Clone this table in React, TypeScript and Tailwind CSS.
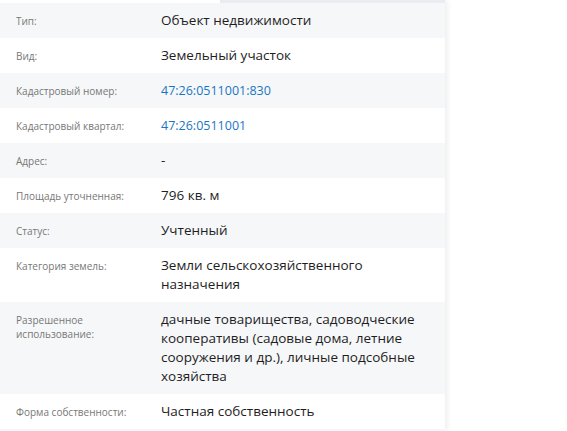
import React from "react";

type Row = { label: string; value: string; link?: boolean };

const rows: Row[] = [
  { label: "Тип:", value: "Объект недвижимости" },
  { label: "Вид:", value: "Земельный участок" },
  { label: "Кадастровый номер:", value: "47:26:0511001:830", link: true },
  { label: "Кадастровый квартал:", value: "47:26:0511001", link: true },
  { label: "Адрес:", value: "-" },
  { label: "Площадь уточненная:", value: "796 кв. м" },
  { label: "Статус:", value: "Учтенный" },
  { label: "Категория земель:", value: "Земли сельскохозяйственного назначения" },
  {
    label: "Разрешенное использование:",
    value:
      "дачные товарищества, садоводческие кооперативы (садовые дома, летние сооружения и др.), личные подсобные хозяйства",
  },
  { label: "Форма собственности:", value: "Частная собственность" },
  { label: "", value: "" },
];

export default function App() {
  return (
    <div
      className="w-[567px] h-[431px] overflow-hidden bg-white"
      style={{ fontFamily: '"Open Sans", "Noto Sans", sans-serif' }}
    >
      <div className="w-[445px] h-full flex flex-col shadow-[2px_0_6px_rgba(0,0,0,0.08)]">
        <div className="flex h-[3px] shrink-0">
          <div className="w-[220px] bg-white" />
          <div className="flex-1 bg-[#ebecf2]" />
        </div>
        {rows.map((r, i) => (
          <div
            key={i}
            className={`flex shrink-0 py-2 ${i % 2 === 0 ? "bg-[#f6f7f9]" : "bg-white"}`}
          >
            <div className="w-[161px] shrink-0 pl-4 pr-3 pt-[3px] text-[10px] leading-[14px] text-[#777]">
              {r.label}
            </div>
            <div
              className={`flex-1 pr-4 leading-[19px] min-h-[19px] ${
                r.link ? "text-[12.5px] text-[#1a76c2]" : "text-[13.5px] text-[#1e1e1e]"
              }`}
            >
              {r.value}
            </div>
          </div>
        ))}
      </div>
    </div>
  );
}
